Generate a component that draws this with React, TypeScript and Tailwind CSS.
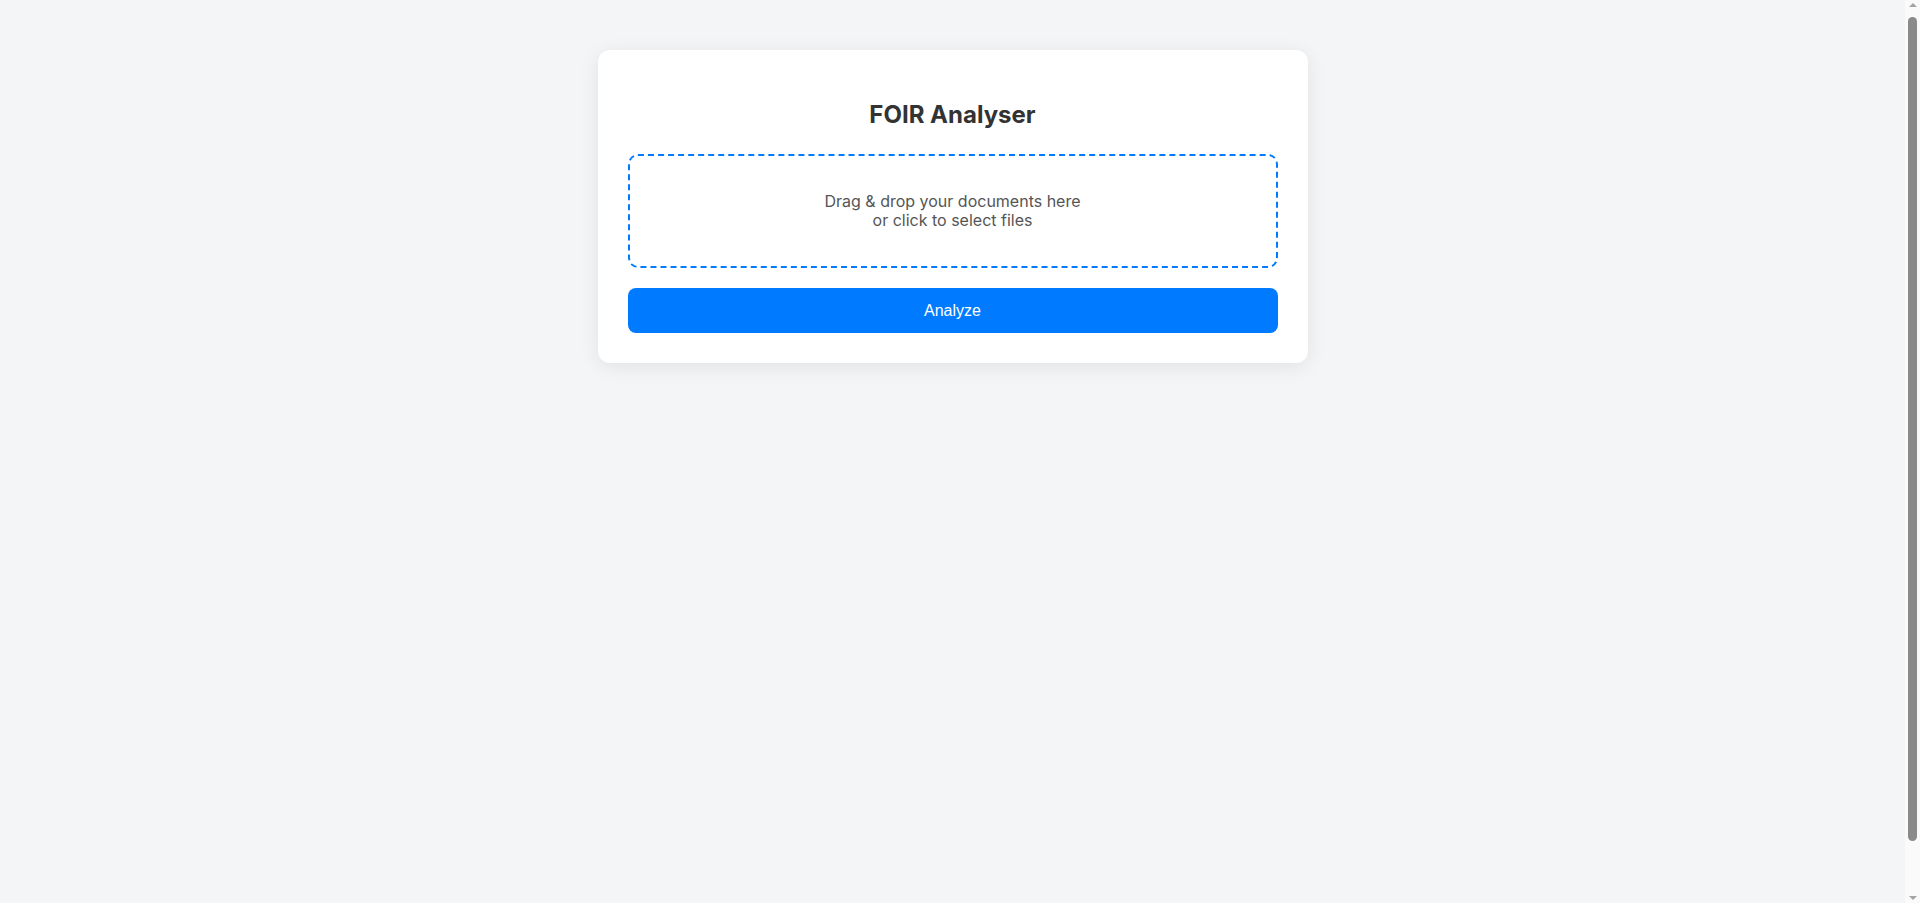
export default function App() {
  return (
    <div className="min-h-[calc(100vh+54px)] bg-[#f4f5f7] pt-[50px] pr-[15px] font-['Inter',sans-serif]">
      <div className="mx-auto w-[710px] rounded-xl bg-white p-[30px] shadow-[0_4px_20px_rgba(0,0,0,0.08)]">
        <h2 className="mt-[20px] mb-[25px] text-center text-[24px] leading-[29px] font-bold text-[#333]">
          FOIR Analyser
        </h2>
        <div className="cursor-pointer rounded-[10px] border-2 border-dashed border-[#007bff] py-[36px] text-center text-[16px] leading-[19px] text-[#555]">
          <p>
            Drag &amp; drop your documents here
            <br />
            or click to select files
          </p>
        </div>
        <button className="mt-[20px] h-[45px] w-full rounded-lg bg-[#007bff] font-['Liberation_Sans',Arial,sans-serif] text-[16px] text-white">
          Analyze
        </button>
      </div>

      {/* page scrollbar */}
      <div className="fixed top-0 right-0 flex h-screen w-[15px] flex-col items-center bg-[#fafafa]">
        <div className="mt-[3px] h-0 w-0 border-x-[4px] border-b-[4px] border-x-transparent border-b-[#a3a3a3]" />
        <div className="mt-[10px] w-[9px] flex-1 rounded-full bg-[#8a8a8a]" />
        <div className="mt-[55px] mb-[3px] h-0 w-0 border-x-[4px] border-t-[4px] border-x-transparent border-t-[#a3a3a3]" />
      </div>
    </div>
  );
}
